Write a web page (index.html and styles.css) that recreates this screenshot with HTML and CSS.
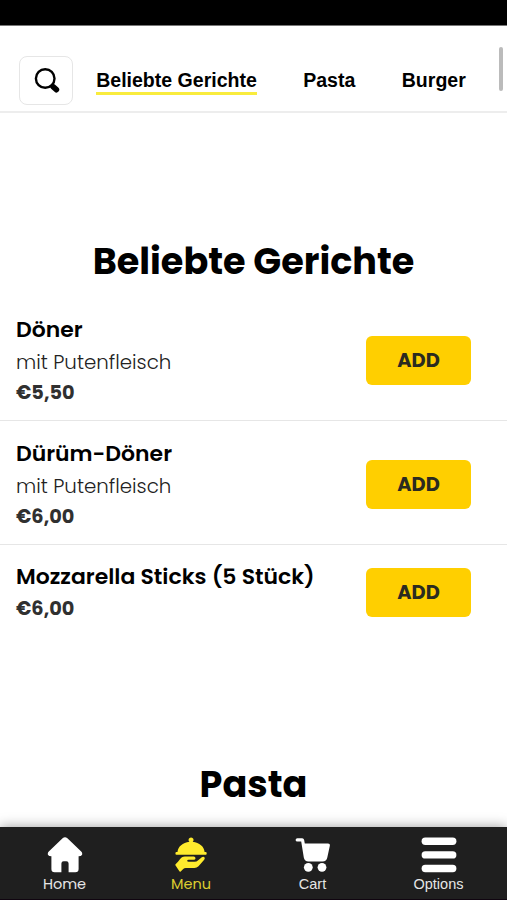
FILE: index.html
```html
<!DOCTYPE html>
<html lang="de">
<head>
<meta charset="utf-8">
<title>Menu</title>
<link rel="stylesheet" href="styles.css">
</head>
<body>
<div class="app">
  <div class="status"></div>
  <header class="header">
    <button class="search" aria-label="Search">
      <svg width="27" height="27" viewBox="0 0 27 27"><circle cx="11.2" cy="11.5" r="9.3" fill="none" stroke="#000" stroke-width="2.4"/><path d="M17.5 18 L19.2 19.7" stroke="#000" stroke-width="3"/><path d="M19 19.7 L22.4 22.7" stroke="#000" stroke-width="5.6" stroke-linecap="round"/></svg>
    </button>
    <nav class="tabs">
      <a class="tab active">Beliebte Gerichte</a>
      <a class="tab">Pasta</a>
      <a class="tab">Burger</a>
    </nav>
    <i class="scrollbar"></i>
  </header>
  <main class="content">
    <h2 class="title">Beliebte Gerichte</h2>
    <section class="items">
      <article class="item">
        <div class="info"><h3>Döner</h3><p class="desc">mit Putenfleisch</p><p class="price">€5,50</p></div>
        <button class="add">ADD</button>
      </article>
      <article class="item">
        <div class="info"><h3>Dürüm-Döner</h3><p class="desc">mit Putenfleisch</p><p class="price">€6,00</p></div>
        <button class="add">ADD</button>
      </article>
      <article class="item last">
        <div class="info"><h3>Mozzarella Sticks (5 Stück)</h3><p class="price">€6,00</p></div>
        <button class="add">ADD</button>
      </article>
    </section>
    <h2 class="title second">Pasta</h2>
  </main>
  <nav class="bottom">
    <a class="link">
      <svg width="36" height="36" viewBox="0 0 36 36" fill="currentColor"><path d="M15.6 1.2 Q18 -.8 20.4 1.2 L34.2 14.6 Q35.8 16.2 34.9 18 Q34.3 19.3 31.6 19.3 V32 Q31.6 35.3 28.3 35.3 H21.6 V26.5 Q21.6 24.3 19.4 24.3 H16.6 Q14.4 24.3 14.4 26.5 V35.3 H7.6 Q4.4 35.3 4.4 32 V19.3 Q1.7 19.3 1.1 18 Q.2 16.2 1.8 14.6 Z"/></svg>
      <span>Home</span>
    </a>
    <a class="link current">
      <svg width="36" height="36" viewBox="0 0 36 36" fill="currentColor"><path d="M18 0.4 A2.5 2.5 0 0 1 19.7 4.8 C26.4 5.6 31.2 9.7 31.6 15 H32.7 Q33.7 15 33.7 16.4 Q33.7 17.7 32.7 17.7 H3.5 Q2.4 17.7 2.4 16.4 Q2.4 15 3.5 15 H4.5 C5 9.7 9.7 5.6 16.4 4.8 A2.5 2.5 0 0 1 18 .4 Z"/><path d="M2.6 27.2 C6 24.8 7.2 19.6 12 19.6 H20.6 Q22.5 19.6 22.5 21.2 Q22.5 22.8 20.6 22.8 H15.5 Q14.2 22.8 14.2 23.8 Q14.2 24.8 15.5 24.8 H21.5 Q23.6 24.8 25.2 23.3 L28.8 20.2 Q30.5 19.2 31.6 20.5 Q32.1 21.5 31.2 22.8 L25.5 29.2 Q23.8 31 21.4 31 H12.7 Q11.3 31 10.2 32.1 L7.7 34.5 Q6.9 35.1 6.2 34.1 L2.4 28.3 Q2 27.7 2.6 27.2 Z"/></svg>
      <span>Menu</span>
    </a>
    <a class="link cart">
      <svg width="36" height="36" viewBox="0 0 36 36" fill="currentColor"><path d="M2.4 1.2 H7.2 Q8.7 1.2 9.1 2.7 L9.8 6.4 H33 Q35.3 6.4 34.9 8.5 L32.3 20.5 Q31.5 24.4 27.6 24.4 H13.4 Q9.6 24.4 8.8 20.5 L6.2 4.6 H2.4 Q.6 4.5 .6 2.9 Q.6 1.3 2.4 1.2 Z"/><circle cx="13.3" cy="30.3" r="4.4"/><circle cx="27" cy="30.3" r="4.4"/></svg>
      <span>Cart</span>
    </a>
    <a class="link options">
      <svg width="36" height="36" viewBox="0 0 36 36" fill="currentColor"><rect x=".6" y=".6" width="34.8" height="7.4" rx="3.7"/><rect x=".6" y="14.2" width="34.8" height="7.4" rx="3.7"/><rect x=".6" y="27.8" width="34.8" height="7.4" rx="3.7"/></svg>
      <span>Options</span>
    </a>
  </nav>
</div>
</body>
</html>
```
FILE: styles.css
```css
* { box-sizing: border-box; }
body { margin: 0; background: #fff; color: #000; font-family: Poppins, Inter, sans-serif; }
h2, h3, p { margin: 0; white-space: nowrap; }
button { margin: 0; padding: 0; font-family: inherit; }
.app { height: 900px; display: flex; flex-direction: column; overflow: hidden; }
.status { height: 26px; flex: none; background: #000; border-bottom: 1px solid #777; }
.header { position: relative; height: 87px; flex: none; display: flex; align-items: flex-start; padding: 30px 0 0 19px; border-bottom: 2px solid #ededed; }
.search { width: 54px; height: 49px; display: flex; align-items: center; justify-content: center; background: #fff; border: 1px solid #e6e6e6; border-radius: 8px; padding: 0 0 0 3px; }
.tabs { display: flex; margin-left: 23.2px; padding-top: 12px; gap: 46.4px; font: bold 19.55px/24px "Liberation Sans", sans-serif; }
.tab { height: 27px; white-space: nowrap; }
.tab.active { border-bottom: 3px solid #f9ec3d; }
.scrollbar { position: absolute; right: 4px; top: 21px; width: 4px; height: 44px; border-radius: 2px; background: #bbb; }
.content { flex: 1; min-height: 0; overflow: hidden; }
.title { margin-top: 121px; height: 56px; text-align: center; font-size: 36.6px; line-height: 56px; font-weight: 700; }
.items { padding-top: 7px; }
.item { height: 124px; display: flex; align-items: center; justify-content: space-between; padding: 4px 36px 0 16px; border-bottom: 1px solid #e6e6e6; }
.item + .item { height: 123.5px; }
.item.last { height: 93px; padding-top: 2px; border-bottom: 0; }
h3 { font-size: 21.95px; line-height: 34px; font-weight: 600; }
.desc { font-size: 19.8px; line-height: 31px; font-weight: 300; color: #222; }
.price { font-size: 19.3px; line-height: 30.5px; font-weight: 700; color: #303030; }
.add { width: 105px; height: 49px; border: 0; border-radius: 6px; background: #ffcf00; color: #2b2b20; font-size: 19.4px; font-weight: 700; }
.second { margin-top: 119px; }
.bottom { position: relative; height: 73px; flex: none; display: grid; grid-template-columns: 127px 127px 115px 1fr; padding: 10px 0 0 1px; background: #1f1f1f; color: #fff; box-shadow: 0 0 12px rgba(0,0,0,.4); border-bottom: 1px solid #100510; }
.link { display: flex; flex-direction: column; align-items: center; font-size: 14.5px; line-height: 20px; }
.link svg { display: block; }
.link span { color: #e6e6e6; margin-top: 1px; }
.current { padding-right: 1px; }
.current { color: #ffeb2d; }
.current span { color: #dccd30; }
.cart, .options { font-family: "Liberation Sans", sans-serif; }
```
